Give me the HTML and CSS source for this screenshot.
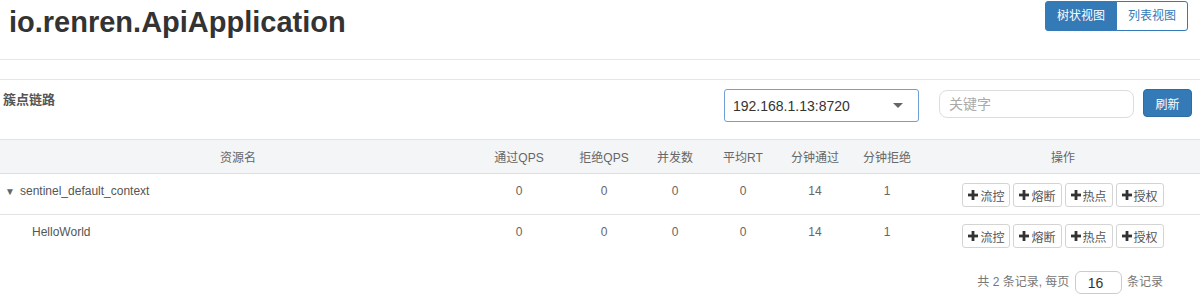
FILE: index.html
```html
<!DOCTYPE html>
<html lang="zh-CN">
<head>
    <meta charset="UTF-8">
    <title>io.renren.ApiApplication</title>
    <link rel="stylesheet" href="styles.css">
</head>
<body>
    <div class="top">
        <h1 class="app-name">io.renren.ApiApplication</h1>
        <div class="view-switch">
            <button class="view-btn active">树状视图</button>
            <button class="view-btn">列表视图</button>
        </div>
    </div>

    <div class="panel">
        <div class="panel-head">
            <div class="panel-title">簇点链路</div>
            <div class="tools">
                <div class="machine-select">
                    <span>192.168.1.13:8720</span>
                    <span class="caret"></span>
                </div>
                <input class="search" type="text" placeholder="关键字">
                <button class="refresh">刷新</button>
            </div>
        </div>

        <table class="res-table">
            <colgroup>
                <col style="width: 476px">
                <col style="width: 86px">
                <col style="width: 84px">
                <col style="width: 58px">
                <col style="width: 78px">
                <col style="width: 66px">
                <col style="width: 78px">
                <col>
            </colgroup>
            <thead>
                <tr>
                    <th>资源名</th>
                    <th>通过QPS</th>
                    <th>拒绝QPS</th>
                    <th>并发数</th>
                    <th>平均RT</th>
                    <th>分钟通过</th>
                    <th>分钟拒绝</th>
                    <th>操作</th>
                </tr>
            </thead>
            <tbody>
                <tr>
                    <td class="name"><span class="tri">&#9660;</span>sentinel_default_context</td>
                    <td>0</td>
                    <td>0</td>
                    <td>0</td>
                    <td>0</td>
                    <td>14</td>
                    <td>1</td>
                    <td class="ops">
                        <div class="op-group">
                            <button class="op"><svg class="plus" viewBox="0 0 10 10"><rect x="3.6" y="0" width="2.8" height="10"/><rect x="0" y="3.6" width="10" height="2.8"/></svg>流控</button>
                            <button class="op"><svg class="plus" viewBox="0 0 10 10"><rect x="3.6" y="0" width="2.8" height="10"/><rect x="0" y="3.6" width="10" height="2.8"/></svg>熔断</button>
                            <button class="op"><svg class="plus" viewBox="0 0 10 10"><rect x="3.6" y="0" width="2.8" height="10"/><rect x="0" y="3.6" width="10" height="2.8"/></svg>热点</button>
                            <button class="op"><svg class="plus" viewBox="0 0 10 10"><rect x="3.6" y="0" width="2.8" height="10"/><rect x="0" y="3.6" width="10" height="2.8"/></svg>授权</button>
                        </div>
                    </td>
                </tr>
                <tr>
                    <td class="name child">HelloWorld</td>
                    <td>0</td>
                    <td>0</td>
                    <td>0</td>
                    <td>0</td>
                    <td>14</td>
                    <td>1</td>
                    <td class="ops">
                        <div class="op-group">
                            <button class="op"><svg class="plus" viewBox="0 0 10 10"><rect x="3.6" y="0" width="2.8" height="10"/><rect x="0" y="3.6" width="10" height="2.8"/></svg>流控</button>
                            <button class="op"><svg class="plus" viewBox="0 0 10 10"><rect x="3.6" y="0" width="2.8" height="10"/><rect x="0" y="3.6" width="10" height="2.8"/></svg>熔断</button>
                            <button class="op"><svg class="plus" viewBox="0 0 10 10"><rect x="3.6" y="0" width="2.8" height="10"/><rect x="0" y="3.6" width="10" height="2.8"/></svg>热点</button>
                            <button class="op"><svg class="plus" viewBox="0 0 10 10"><rect x="3.6" y="0" width="2.8" height="10"/><rect x="0" y="3.6" width="10" height="2.8"/></svg>授权</button>
                        </div>
                    </td>
                </tr>
            </tbody>
        </table>

        <div class="pager">
            共 2 条记录, 每页
            <input class="page-size" type="text" value="16">
            条记录
        </div>
    </div>
</body>
</html>
```

FILE: styles.css
```css
body {
    margin: 0;
    font-family: "Liberation Sans", "Noto Sans CJK SC", sans-serif;
    color: #333;
    background: #fff;
}

.top {
    height: 59px;
    border-bottom: 1px solid #e6e6e6;
    display: flex;
    justify-content: space-between;
    align-items: flex-start;
}

.app-name {
    margin: 4px 0 0 9px;
    font-size: 29px;
    line-height: 36px;
    font-weight: bold;
    color: #333;
}

.view-switch {
    display: flex;
    margin: 1px 12px 0 0;
}

.view-btn {
    font-family: inherit;
    font-size: 12px;
    line-height: 18px;
    padding: 5px 11px;
    background: #fff;
    color: #337ab7;
    border: 1px solid #337ab7;
    border-radius: 0 3px 3px 0;
    margin-left: -1px;
}

.view-btn.active {
    background: #337ab7;
    color: #fff;
    border-radius: 3px 0 0 3px;
    margin-left: 0;
}

.panel {
    margin-top: 19px;
    border-top: 1px solid #e6e6e6;
}

.panel-head {
    display: flex;
    justify-content: space-between;
    align-items: flex-start;
    padding: 9px 8px 17px 3px;
}

.panel-title {
    margin-top: 2px;
    font-size: 13px;
    line-height: 18px;
    font-weight: bold;
    color: #555;
}

.tools {
    display: flex;
    align-items: flex-start;
}

.machine-select {
    box-sizing: border-box;
    width: 195px;
    height: 33px;
    border: 1px solid #6f9fd3;
    border-radius: 3px;
    display: flex;
    align-items: center;
    justify-content: space-between;
    padding: 0 15px 0 8px;
    font-size: 14px;
    color: #333;
    margin-right: 20px;
}

.caret {
    width: 0;
    height: 0;
    border-left: 5px solid transparent;
    border-right: 5px solid transparent;
    border-top: 5px solid #666;
}

.search {
    box-sizing: border-box;
    width: 195px;
    height: 28px;
    margin-top: 1px;
    border: 1px solid #ddd;
    border-radius: 8px;
    padding: 0 9px;
    font-family: inherit;
    font-size: 14px;
    margin-right: 9px;
}

.search::placeholder {
    color: #aaa;
}

.refresh {
    width: 49px;
    height: 28px;
    background: #337ab7;
    color: #fff;
    border: 1px solid #2e6da4;
    border-radius: 4px;
    font-family: inherit;
    font-size: 12px;
    padding: 0;
}

.res-table {
    width: 100%;
    border-collapse: collapse;
    table-layout: fixed;
    font-size: 12px;
    color: #666;
}

.res-table th {
    background: #f4f5f6;
    border-top: 1px solid #e2e2e2;
    border-bottom: 1px solid #dedede;
    font-weight: normal;
    padding: 10px 0 6px;
    line-height: 17px;
    text-align: center;
    color: #666;
}

.res-table td {
    padding: 9px 0 14px;
    line-height: 17px;
    text-align: center;
    vertical-align: top;
    border-bottom: 1px solid #e2e2e2;
}

.res-table tbody tr:last-child td {
    border-bottom: none;
}

.res-table td.name {
    text-align: left;
    padding-left: 5px;
    color: #555;
}

.res-table td.child {
    padding-left: 32px;
}

.tri {
    display: inline-block;
    font-size: 10px;
    color: #666;
    width: 15px;
}

.res-table td.ops {
    padding: 9px 0 7px;
}

.op-group {
    display: flex;
    justify-content: center;
    gap: 3px;
}

.op {
    display: flex;
    align-items: center;
    height: 24px;
    padding: 0 5px;
    background: #fff;
    border: 1px solid #d4d4d4;
    border-radius: 3px;
    font-family: inherit;
    font-size: 12px;
    color: #555;
}

.plus {
    width: 10px;
    height: 10px;
    fill: #333;
    margin-right: 2px;
}

.pager {
    text-align: right;
    padding: 16px 37px 0 0;
    font-size: 12px;
    color: #777;
}

.page-size {
    box-sizing: border-box;
    width: 47px;
    height: 23px;
    border: 1px solid #ccc;
    border-radius: 6px;
    font-family: inherit;
    font-size: 14px;
    color: #333;
    padding: 0 12px;
    margin: 0 2px;
    vertical-align: middle;
}
```
